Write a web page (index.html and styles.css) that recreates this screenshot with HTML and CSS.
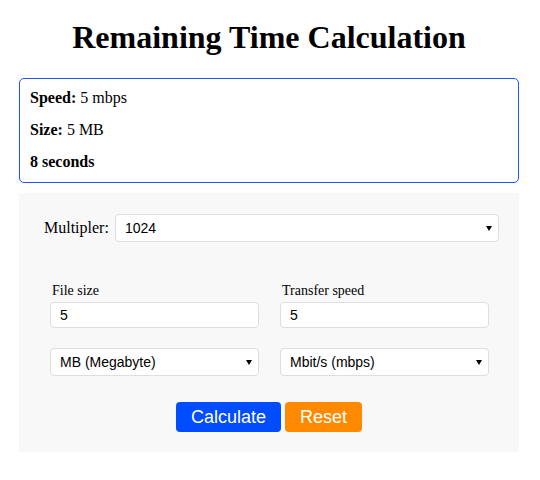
FILE: index.html
```html
<!DOCTYPE html>
<html lang="en">
<head>
<meta charset="utf-8">
<title>Remaining Time Calculation</title>
<link rel="stylesheet" href="styles.css">
</head>
<body>
<main class="app">
  <h1 class="title">Remaining Time Calculation</h1>
  <div class="result">
    <p class="result-line"><b>Speed:</b> 5 mbps</p>
    <p class="result-line"><b>Size:</b> 5 MB</p>
    <p class="result-line"><b>8 seconds</b></p>
  </div>
  <form class="panel">
    <div class="mult-row">
      <label class="mult-label">Multipler:</label>
      <div class="select-wrap grow">
        <select class="field select"><option>1024</option><option>1000</option></select>
      </div>
    </div>
    <div class="grid">
      <div class="col">
        <label class="field-label">File size</label>
        <input class="field input" type="text" value="5">
      </div>
      <div class="col">
        <label class="field-label">Transfer speed</label>
        <input class="field input" type="text" value="5">
      </div>
      <div class="select-wrap">
        <select class="field select"><option>MB (Megabyte)</option></select>
      </div>
      <div class="select-wrap">
        <select class="field select"><option>Mbit/s (mbps)</option></select>
      </div>
    </div>
    <div class="actions">
      <button type="button" class="btn btn-blue">Calculate</button>
      <button type="reset" class="btn btn-orange">Reset</button>
    </div>
  </form>
</main>
</body>
</html>
```
FILE: styles.css
```css
body {
  margin: 8px 9px 8px 7px;
  font-family: "Liberation Serif", "Times New Roman", serif;
  color: #000;
  background: #fff;
}

.app {
  width: 500px;
  margin: 0 auto;
}

.title {
  margin: 11px 0 22px;
  font-size: 32px;
  font-weight: bold;
  text-align: center;
  line-height: normal;
}

.result {
  border: 1px solid #1f56ff;
  border-radius: 5px;
  padding: 10px 10px 11px;
  font-size: 16px;
}

.result-line {
  margin: 0 0 14px;
  line-height: 18px;
}

.result-line:last-child {
  margin-bottom: 0;
}

.panel {
  margin-top: 10px;
  background: #f8f8f8;
  padding: 21px 20px 20px;
}

.mult-row {
  display: flex;
  align-items: center;
  gap: 6px;
  padding-left: 5px;
  font-size: 16px;
}

.grow {
  flex: 1;
}

.select-wrap {
  position: relative;
}

.select-wrap::after {
  content: "";
  position: absolute;
  right: 7px;
  top: 50%;
  margin-top: -2px;
  border-left: 3px solid transparent;
  border-right: 3px solid transparent;
  border-top: 5px solid #000;
  pointer-events: none;
}

.field {
  box-sizing: border-box;
  width: 100%;
  border: 1px solid #dedede;
  border-radius: 4px;
  background: #fff;
  font-family: "Liberation Sans", Arial, sans-serif;
  font-size: 14px;
  color: #000;
  margin: 0;
  outline: none;
}

.select {
  appearance: none;
  -webkit-appearance: none;
  height: 28px;
  padding: 0 20px 0 9px;
  display: block;
}

.input {
  height: 26px;
  padding: 0 9px;
  display: block;
}

.grid {
  margin-top: 41px;
  padding: 0 10px 0 11px;
  display: grid;
  grid-template-columns: 1fr 1fr;
  column-gap: 21px;
  row-gap: 20px;
}

.field-label {
  display: block;
  font-size: 14px;
  line-height: 16px;
  padding-left: 2px;
  margin-bottom: 3px;
}

.actions {
  margin-top: 26px;
  display: flex;
  justify-content: center;
  gap: 4px;
}

.btn {
  height: 30px;
  border: none;
  border-radius: 4px;
  padding: 0 15px;
  color: #fff;
  font-family: "Liberation Sans", Arial, sans-serif;
  font-size: 18px;
  cursor: pointer;
}

.btn-blue {
  background: #004cff;
}

.btn-orange {
  background: #ff8a00;
}
```
